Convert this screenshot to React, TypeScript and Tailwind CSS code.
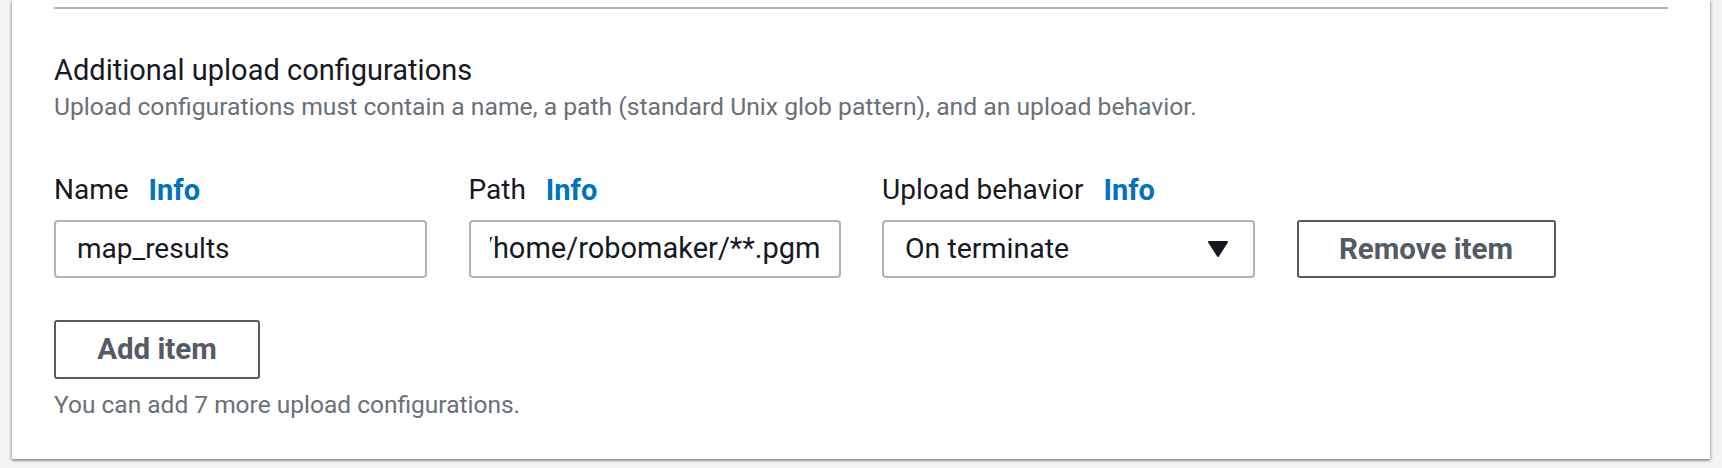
const font = { fontFamily: "Roboto, 'Noto Sans', 'Liberation Sans', sans-serif" }

const FieldLabel = ({ text }: { text: string }) => (
  <div className="flex items-center gap-[20px] text-[28px] leading-[32px] text-[#16191f]">
    <span>{text}</span>
    <a className="text-[29px] font-bold text-[#0073bb]">Info</a>
  </div>
)

export default function App() {
  return (
    <div className="h-[468px] w-[1722px] overflow-hidden bg-[#f2f3f3]" style={font}>
      <div className="ml-[12px] w-[1698px] bg-white px-[42px] pt-[7px] pb-[40px] shadow-[0_2px_2px_0_rgba(0,28,36,0.3),2px_1px_2px_0_rgba(0,28,36,0.15),-2px_1px_2px_0_rgba(0,28,36,0.15)]">
        <div className="h-[2px] bg-[#aab7b8]" />

        <h3 className="mt-[43px] text-[29px] leading-[36px] text-[#16191f]">Additional upload configurations</h3>
        <p className="mt-[5px] text-[24.7px] leading-[28px] text-[#687078]">
          Upload configurations must contain a name, a path (standard Unix glob pattern), and an upload behavior.
        </p>

        <div className="mt-[53px] grid grid-cols-[373px_372px_373px_259px] gap-x-[41.5px] gap-y-[14px]">
          <FieldLabel text="Name" />
          <FieldLabel text="Path" />
          <FieldLabel text="Upload behavior" />
          <div />

          <div className="flex h-[58px] items-center rounded-[4px] border-2 border-[#aab7b8] px-[21px] text-[28px] text-[#16191f]">
            map_results
          </div>
          <div className="flex h-[58px] items-center rounded-[4px] border-2 border-[#aab7b8] px-[19px] text-[29px] text-[#16191f]">
            <div className="flex w-full justify-end overflow-hidden whitespace-nowrap">
              <span className="-mr-[1px]">/home/robomaker/**.pgm</span>
            </div>
          </div>
          <div className="flex h-[58px] items-center justify-between rounded-[4px] border-2 border-[#aab7b8] pl-[21px] pr-[25px] text-[28.5px] text-[#16191f]">
            <span>On terminate</span>
            <svg width="20" height="16" viewBox="0 0 20 16">
              <path d="M1 1 H19 L10 15 Z" fill="#16191f" stroke="#16191f" strokeWidth="2" strokeLinejoin="round" />
            </svg>
          </div>
          <button className="h-[58px] rounded-[3px] border-2 border-[#545b64] text-[29.5px] font-bold text-[#545b64]">
            Remove item
          </button>
        </div>

        <button className="mt-[42px] h-[59px] w-[206px] rounded-[3px] border-2 border-[#545b64] text-[29.5px] font-bold text-[#545b64]">
          Add item
        </button>
        <p className="mt-[12px] text-[24.5px] leading-[28px] text-[#687078]">You can add 7 more upload configurations.</p>
      </div>
    </div>
  )
}
